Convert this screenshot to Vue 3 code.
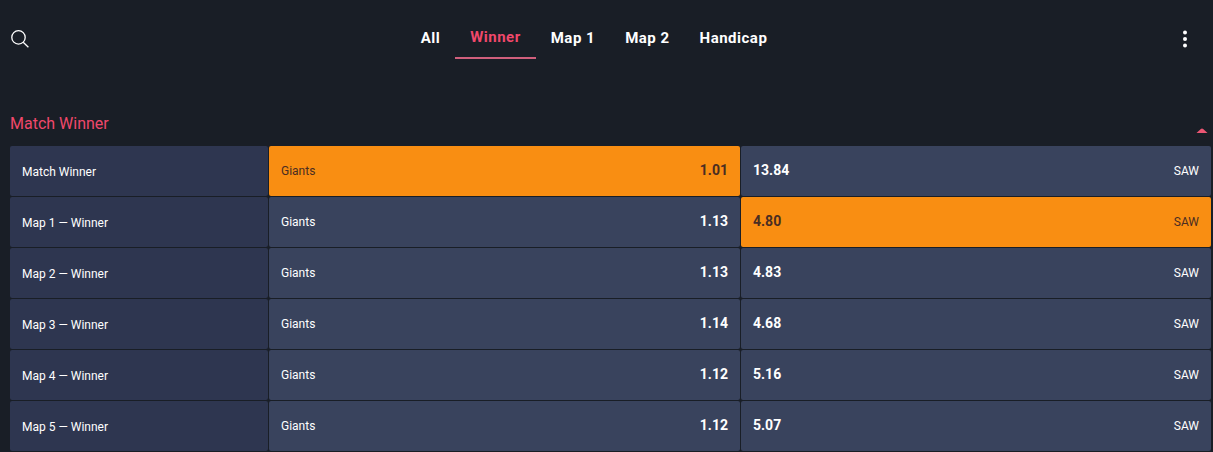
<script setup>
import { ref } from 'vue'

const tabs = ['All', 'Winner', 'Map 1', 'Map 2', 'Handicap']
const activeTab = ref('Winner')
const opened = ref(true)

const rows = ref([
  { title: 'Match Winner', home: '1.01', away: '13.84', picked: 'home' },
  { title: 'Map 1 — Winner', home: '1.13', away: '4.80', picked: 'away' },
  { title: 'Map 2 — Winner', home: '1.13', away: '4.83', picked: '' },
  { title: 'Map 3 — Winner', home: '1.14', away: '4.68', picked: '' },
  { title: 'Map 4 — Winner', home: '1.12', away: '5.16', picked: '' },
  { title: 'Map 5 — Winner', home: '1.12', away: '5.07', picked: '' }
])

// clicking the same odd again removes the pick
function pick(row, side) {
  row.picked = row.picked === side ? '' : side
}
</script>

<template>
  <div class="markets">
    <header class="toolbar">
      <svg class="search" width="20" height="20" viewBox="0 0 20 20">
        <circle cx="8.5" cy="8.4" r="6.7" />
        <path d="M13.2 13.2l5.2 5" />
      </svg>
      <nav class="tabs">
        <a
          v-for="tab in tabs"
          :key="tab"
          class="tab"
          :class="{ active: tab === activeTab }"
          @click="activeTab = tab"
        >{{ tab }}</a>
      </nav>
      <svg class="more" width="6" height="18" viewBox="0 0 6 18">
        <circle cx="3" cy="2.6" r="2" />
        <circle cx="3" cy="9" r="2" />
        <circle cx="3" cy="15.4" r="2" />
      </svg>
    </header>

    <div class="heading" @click="opened = !opened">
      <span>Match Winner</span>
      <svg class="arrow" width="12" height="5" viewBox="0 0 12 5">
        <path d="M0.5 5L4.8 1Q6 0 7.2 1L11.5 5z" />
      </svg>
    </div>

    <div v-if="opened" class="grid">
      <template v-for="row in rows" :key="row.title">
        <div class="cell name">{{ row.title }}</div>
        <div class="cell odd" :class="{ picked: row.picked === 'home' }" @click="pick(row, 'home')">
          <span>Giants</span>
          <b>{{ row.home }}</b>
        </div>
        <div class="cell odd" :class="{ picked: row.picked === 'away' }" @click="pick(row, 'away')">
          <b>{{ row.away }}</b>
          <span>SAW</span>
        </div>
      </template>
    </div>
  </div>
</template>

<style>
body {
  background: #191e26;
  overflow: hidden;
}
</style>

<style scoped>
.markets {
  box-sizing: border-box;
  height: 452px;
  padding: 16px 2px 0 10px;
  background: #191e26;
  color: #fff;
  font-family: Roboto, "Liberation Sans", sans-serif;
}

.toolbar {
  display: flex;
  justify-content: space-between;
  height: 43px;
}

.search {
  margin-top: 13px;
  fill: none;
  stroke: #fff;
  stroke-width: 1.3;
}

.tabs {
  display: flex;
  margin-right: 24px;
}

.tab {
  box-sizing: border-box;
  height: 43px;
  padding: 0 15px;
  line-height: 45px;
  font-size: 15px;
  font-weight: 700;
  letter-spacing: 0.5px;
  cursor: pointer;
}

.tab.active {
  line-height: 43px;
  color: #f0486b;
  border-bottom: 2px solid #d05f7c;
}

.more {
  margin: 14px 23px 0 0;
  fill: #fff;
}

.heading {
  display: flex;
  justify-content: space-between;
  height: 33px;
  margin-top: 54px;
  line-height: 21px;
  font-size: 16px;
  color: #f0486b;
  cursor: pointer;
}

.arrow {
  margin: 15px 3px 0 0;
  fill: #ec5673;
}

.grid {
  display: grid;
  grid-template-columns: 258px 471px 470px;
  grid-auto-rows: 50px;
  gap: 1px;
}

.cell {
  box-sizing: border-box;
  padding: 0 12px;
  border-radius: 2px;
  font-size: 12px;
}

.name {
  background: #2e3650;
  line-height: 52px;
}

.odd {
  display: flex;
  justify-content: space-between;
  background: #39435d;
  line-height: 50px;
  cursor: pointer;
}

.odd b {
  font-size: 14px;
  line-height: 49px;
}

.picked {
  background: #f98e12;
  color: #4a2d22;
}
</style>
